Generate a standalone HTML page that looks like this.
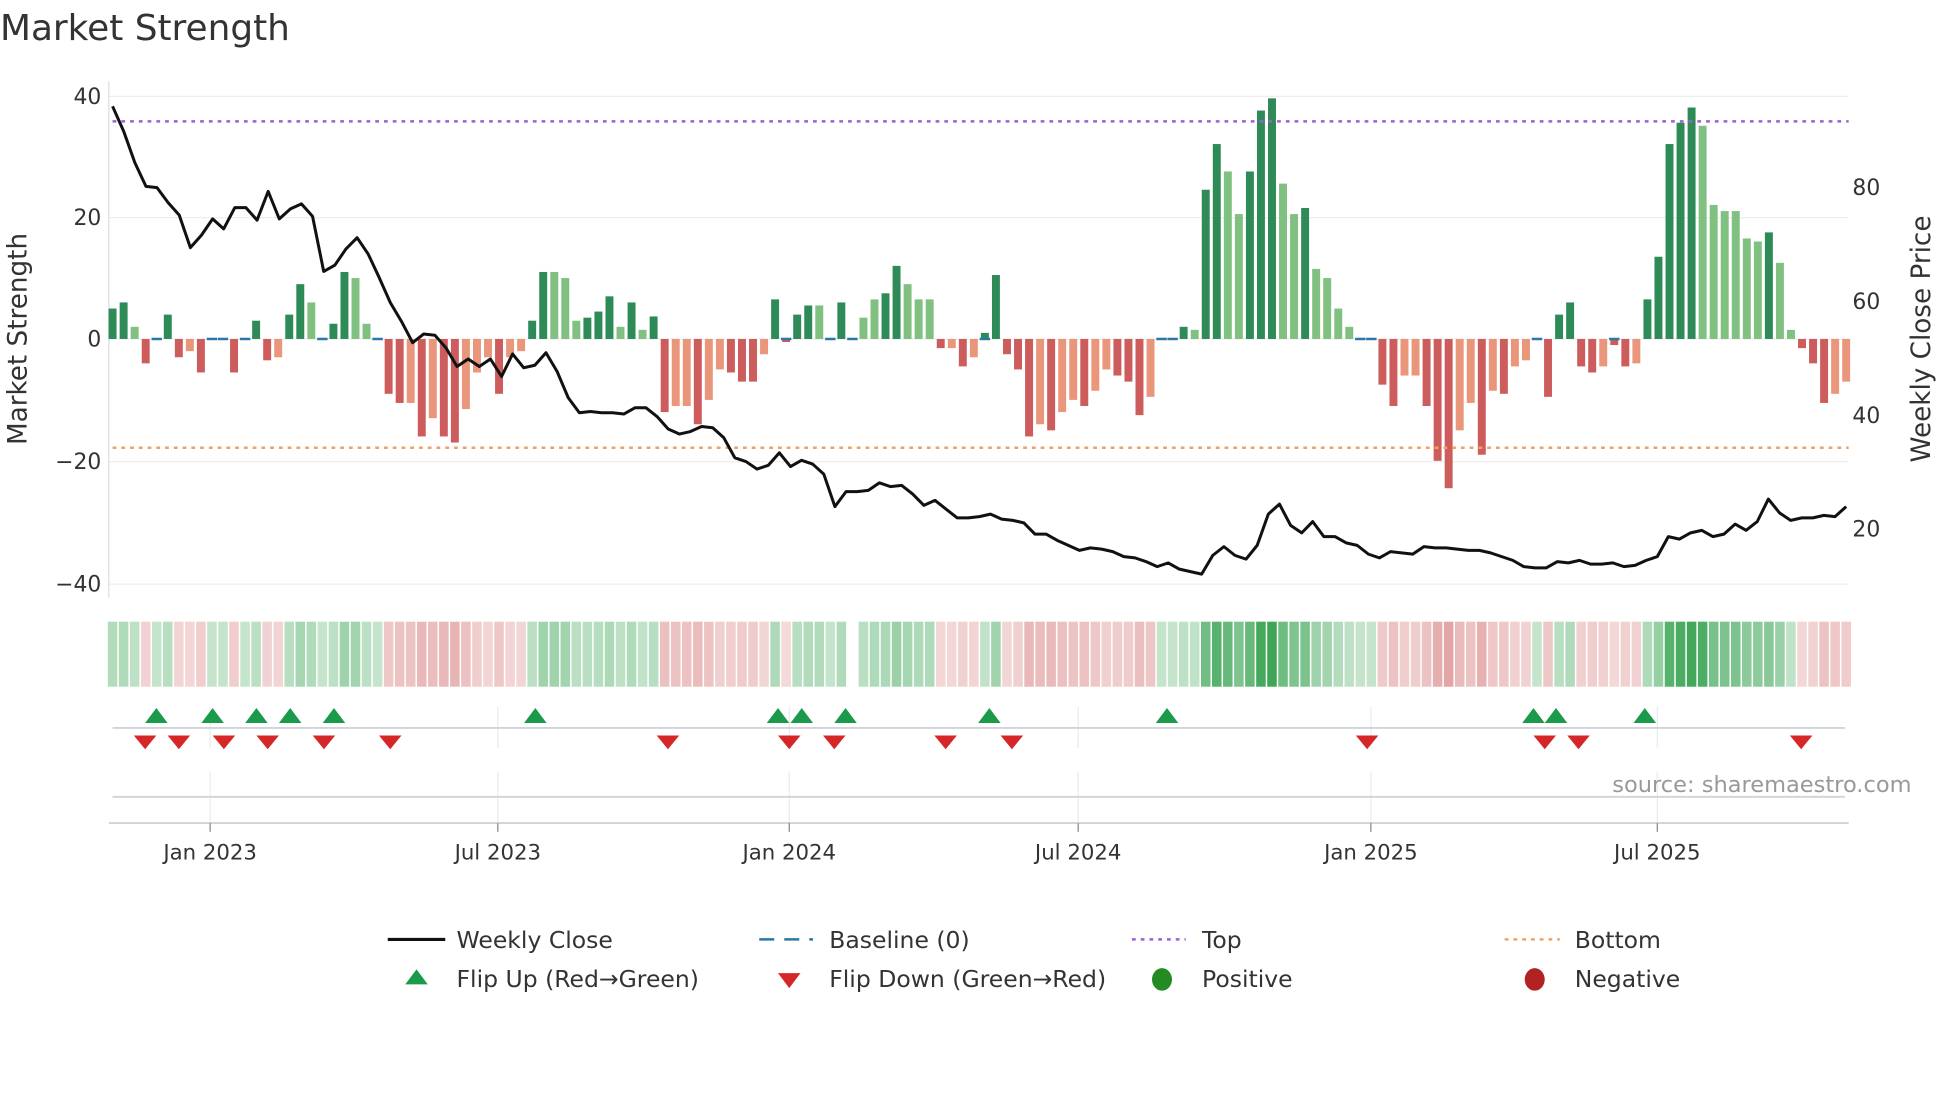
<!DOCTYPE html>
<html><head><meta charset="utf-8"><style>
html,body{margin:0;padding:0;background:#fff;overflow:hidden}
svg{display:block}
text{font-family:"DejaVu Sans","Liberation Sans",sans-serif;fill:#333}
</style></head><body>
<svg id="s" width="1960" height="1102" viewBox="0 0 1567 881" preserveAspectRatio="none" xmlns="http://www.w3.org/2000/svg">
<text x="0" y="32" font-size="28.7">Market Strength</text>
<g stroke="#eeeeee" stroke-width="1">
<line x1="87" y1="77" x2="1478" y2="77"/><line x1="87" y1="174" x2="1478" y2="174"/><line x1="87" y1="271" x2="1478" y2="271"/><line x1="87" y1="369" x2="1478" y2="369"/><line x1="87" y1="467" x2="1478" y2="467"/>
</g>
<line x1="87" y1="65" x2="87" y2="478" stroke="#ddd"/>
<g font-size="17.5" text-anchor="end">
<text x="81" y="83">40</text><text x="81" y="180">20</text><text x="81" y="277">0</text><text x="81" y="375">−20</text><text x="81" y="473">−40</text>
</g>
<g font-size="17.5">
<text x="1481" y="156">80</text><text x="1481" y="247">60</text><text x="1481" y="338">40</text><text x="1481" y="429">20</text>
</g>
<text transform="translate(21,271) rotate(-90)" font-size="21" text-anchor="middle">Market Strength</text>
<text transform="translate(1543,271) rotate(-90)" font-size="21" text-anchor="middle">Weekly Close Price</text>
<g id="bars"></g>
<line x1="90" y1="97" x2="1478" y2="97" stroke="#9b5fd6" stroke-width="2" stroke-dasharray="3,4"/>
<line x1="90" y1="358" x2="1478" y2="358" stroke="#f0a060" stroke-width="2" stroke-dasharray="3,4"/>
<polyline id="price" fill="none" stroke="#111" stroke-width="2.4" stroke-linejoin="round"/>
<g id="strip"></g>
<g stroke="#e8ecf0" stroke-width="1">
<line x1="168" y1="565" x2="168" y2="598"/><line x1="398" y1="565" x2="398" y2="598"/><line x1="631" y1="565" x2="631" y2="598"/><line x1="862" y1="565" x2="862" y2="598"/><line x1="1096" y1="565" x2="1096" y2="598"/><line x1="1325" y1="565" x2="1325" y2="598"/>
<line x1="168" y1="617" x2="168" y2="658"/><line x1="398" y1="617" x2="398" y2="658"/><line x1="631" y1="617" x2="631" y2="658"/><line x1="862" y1="617" x2="862" y2="658"/><line x1="1096" y1="617" x2="1096" y2="658"/><line x1="1325" y1="617" x2="1325" y2="658"/>
</g>
<line x1="90" y1="582" x2="1475" y2="582" stroke="#d0d3d8" stroke-width="1.5"/>
<line x1="90" y1="637" x2="1475" y2="637" stroke="#d0d3d8" stroke-width="1.5"/>
<line x1="87" y1="658" x2="1478" y2="658" stroke="#d0d3d8" stroke-width="1.5"/>
<g id="marks"></g>
<g stroke="#888" stroke-width="1">
<line x1="168" y1="658" x2="168" y2="665"/><line x1="398" y1="658" x2="398" y2="665"/><line x1="631" y1="658" x2="631" y2="665"/><line x1="862" y1="658" x2="862" y2="665"/><line x1="1096" y1="658" x2="1096" y2="665"/><line x1="1325" y1="658" x2="1325" y2="665"/>
</g>
<g font-size="17" text-anchor="middle">
<text x="168" y="687">Jan 2023</text><text x="398" y="687">Jul 2023</text><text x="631" y="687">Jan 2024</text><text x="862" y="687">Jul 2024</text><text x="1096" y="687">Jan 2025</text><text x="1325" y="687">Jul 2025</text>
</g>
<text x="1289" y="633" font-size="18" style="fill:#999">source: sharemaestro.com</text>
<g font-size="18.8">
<line x1="310" y1="751" x2="356" y2="751" stroke="#111" stroke-width="2.5"/><text x="365" y="758">Weekly Close</text>
<line x1="607" y1="751" x2="650" y2="751" stroke="#2a78a8" stroke-width="2" stroke-dasharray="12,8"/><text x="663" y="758">Baseline (0)</text>
<line x1="905" y1="751" x2="948" y2="751" stroke="#9b5fd6" stroke-width="2" stroke-dasharray="3,4"/><text x="961" y="758">Top</text>
<line x1="1203" y1="751" x2="1247" y2="751" stroke="#f0a060" stroke-width="2" stroke-dasharray="3,4"/><text x="1259" y="758">Bottom</text>
<polygon points="333,775 324,787 342,787" fill="#1a9a4a"/><text x="365" y="789">Flip Up (Red→Green)</text>
<polygon points="622,778 640,778 631,790" fill="#d62728"/><text x="663" y="789">Flip Down (Green→Red)</text>
<ellipse cx="929" cy="783" rx="8" ry="9" fill="#228b22"/><text x="961" y="789">Positive</text>
<ellipse cx="1227" cy="783" rx="8" ry="9" fill="#b22222"/><text x="1259" y="789">Negative</text>
</g>
</svg>
<script>
var NS="http://www.w3.org/2000/svg";
function el(p,t,a){var e=document.createElementNS(NS,t);for(var k in a)e.setAttribute(k,a[k]);p.appendChild(e);return e;}
var B=[[5,0],[6,0],[2,1],[-4,0],[0,0],[4,0],[-3,0],[-2,1],[-5.5,0],[0,0],[0,0],[-5.5,0],[0,0],[3,0],[-3.5,0],[-3,1],[4,0],[9,0],[6,1],[0,0],[2.5,0],[11,0],[10,1],[2.5,1],[0,0],[-9,0],[-10.5,0],[-10.5,1],[-16,0],[-13,1],[-16,0],[-17,0],[-11.5,1],[-5.5,1],[-3,1],[-9,0],[-3,1],[-2,1],[3,0],[11,0],[11,1],[10,1],[3,1],[3.5,0],[4.5,0],[7,0],[2,1],[6,0],[1.5,1],[3.7,0],[-12,0],[-11,1],[-11,1],[-14,0],[-10,1],[-5,1],[-5.5,0],[-7,0],[-7,0],[-2.5,1],[6.5,0],[-0.5,0],[4,0],[5.5,0],[5.5,1],[0,0],[6,0],[0,0],[3.5,1],[6.5,1],[7.5,0],[12,0],[9,1],[6.5,1],[6.5,1],[-1.5,0],[-1.5,1],[-4.5,0],[-3,1],[1,0],[10.5,0],[-2.5,0],[-5,0],[-16,0],[-14,1],[-15,0],[-12,1],[-10,1],[-11,0],[-8.5,1],[-5,1],[-6,0],[-7,0],[-12.5,0],[-9.5,1],[0,0],[0,0],[2,0],[1.5,1],[24.5,0],[32,0],[27.5,1],[20.5,1],[27.5,0],[37.5,0],[39.5,0],[25.5,1],[20.5,1],[21.5,0],[11.5,1],[10,1],[5,1],[2,1],[0,0],[0,0],[-7.5,0],[-11,0],[-6,1],[-6,1],[-11,0],[-20,0],[-24.5,0],[-15,1],[-10.5,1],[-19,0],[-8.5,1],[-9,0],[-4.5,1],[-3.5,1],[0,0],[-9.5,0],[4,0],[6,0],[-4.5,0],[-5.5,0],[-4.5,1],[-1,0],[-4.5,0],[-4,1],[6.5,0],[13.5,0],[32,0],[35.5,0],[38,0],[35,1],[22,1],[21,1],[21,1],[16.5,1],[16,1],[17.5,0],[12.5,1],[1.5,1],[-1.5,0],[-4,0],[-10.5,0],[-9,1],[-7,1]];
var P=[85,105,130,149,150,162,172,198,188,175,183,166,166,176,153,175,167,163,173,217,212,199,190,203,222,242,257,274,267,268,278,293,287,293,287,301,283,294,292,282,297,318,330,329,330,330,331,326,326,333,343,347,345,341,342,350,366,369,375,372,362,373,368,371,379,405,393,393,392,386,389,388,395,404,400,407,414,414,413,411,415,416,418,427,427,432,436,440,438,439,441,445,446,449,453,450,455,457,459,444,437,444,447,436,411,403,420,426,417,429,429,434,436,443,446,441,442,443,437,438,438,439,440,440,442,445,448,453,454,454,449,450,448,451,451,450,453,452,448,445,429,431,426,424,429,427,419,424,417,399,410,416,414,414,412,413,405];
var bars=document.getElementById('bars'),strip=document.getElementById('strip');
var n=B.length,dx=(1476-90)/(n-1),w=dx*0.72;
function mix(c,t){var r=Math.round(255+(c[0]-255)*t),g=Math.round(255+(c[1]-255)*t),b=Math.round(255+(c[2]-255)*t);return 'rgb('+r+','+g+','+b+')';}
B.forEach(function(d,i){var v=d[0],x=90+i*dx,y0=271,h=Math.abs(v)*4.87;
 if(v===0){el(bars,'line',{x1:x-w/2-1,x2:x+w/2+1,y1:271,y2:271,stroke:'#2a78a8','stroke-width':2});}
 else{var c=v>0?(d[1]?'#80c080':'#2e8b57'):(d[1]?'#e9967a':'#cd5c5c');
 el(bars,'rect',{x:x-w/2,y:v>0?y0-h:y0,width:w,height:h,fill:c});
 if(Math.abs(v)<1.5) el(bars,'line',{x1:x-w/2-1,x2:x+w/2+1,y1:271,y2:271,stroke:'#2a78a8','stroke-width':2});}
 var t=0.3+Math.min(Math.abs(v),40)/40*0.7;
 var col=v>=0?mix([60,165,85],t):mix([210,110,110],t*0.85);
 if(x>678&&x<688) return;
 el(strip,'rect',{x:x-dx/2+0.6,y:497,width:dx-1.2,height:52,fill:col});
});
var pts=P.map(function(y,i){return (90+i*(1476-90)/(P.length-1)).toFixed(1)+','+y;}).join(' ');
document.getElementById('price').setAttribute('points',pts);
var m=document.getElementById('marks');
[125,170,205,232,267,428,622,641,676,791,933,1226,1244,1315].forEach(function(x){el(m,'polygon',{points:(x)+',566 '+(x-9)+',578 '+(x+9)+',578',fill:'#1a9a4a'});});
[116,143,179,214,259,312,534,631,667,756,809,1093,1235,1262,1440].forEach(function(x){el(m,'polygon',{points:(x-9)+',588 '+(x+9)+',588 '+x+',599',fill:'#d62728'});});
</script>
</body></html>
